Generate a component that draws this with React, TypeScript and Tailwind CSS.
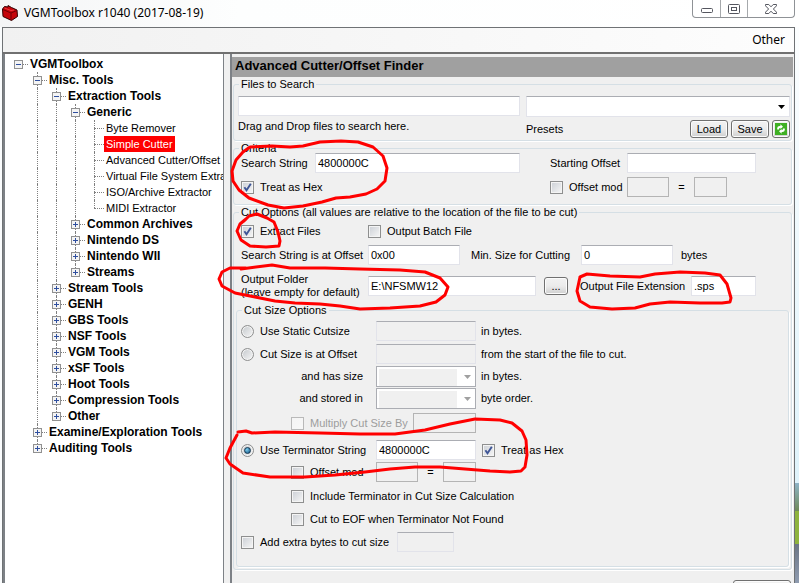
import { useId, type InputHTMLAttributes, type ReactNode } from "react";
import { clsx } from "clsx";

type TreeNode = { name: string; leaf?: boolean; selected?: boolean; children?: TreeNode[] };

const leaf = (name: string, selected = false): TreeNode => ({ name, leaf: true, selected });

const tree: TreeNode = {
  name: "VGMToolbox",
  children: [
    {
      name: "Misc. Tools",
      children: [
        {
          name: "Extraction Tools",
          children: [
            {
              name: "Generic",
              children: [
                leaf("Byte Remover"),
                leaf("Simple Cutter", true),
                leaf("Advanced Cutter/Offset Finder"),
                leaf("Virtual File System Extractor"),
                leaf("ISO/Archive Extractor"),
                leaf("MIDI Extractor"),
              ],
            },
            { name: "Common Archives" },
            { name: "Nintendo DS" },
            { name: "Nintendo WII" },
            { name: "Streams" },
          ],
        },
        { name: "Stream Tools" },
        { name: "GENH" },
        { name: "GBS Tools" },
        { name: "NSF Tools" },
        { name: "VGM Tools" },
        { name: "xSF Tools" },
        { name: "Hoot Tools" },
        { name: "Compression Tools" },
        { name: "Other" },
      ],
    },
    { name: "Examine/Exploration Tools" },
    { name: "Auditing Tools" },
  ],
};

function TreeItem({ node, guides, last, root }: { node: TreeNode; guides: boolean[]; last: boolean; root?: boolean }) {
  return (
    <li>
      <div className="flex h-4 items-center whitespace-nowrap">
        {guides.map((on, i) => (
          <span key={i} className="flex h-4 w-[19px] shrink-0 pl-[9px]">
            {on && <span className="h-4 border-l border-dotted border-[#808080]" />}
          </span>
        ))}
        <span className="relative h-4 w-[19px] shrink-0">
          {!root && (
            <span
              className={clsx("absolute top-0 left-[9px] border-l border-dotted border-[#808080]", last ? "h-2" : "h-4")}
            />
          )}
          <span className="absolute top-2 left-[9px] w-[10px] border-t border-dotted border-[#808080]" />
          {!node.leaf && (
            <button
              aria-label={(node.children ? "Collapse " : "Expand ") + node.name}
              className="absolute top-1 left-[5px] h-[9px] w-[9px] border border-[#919191] bg-[#f4f4f4]"
            >
              <span className="absolute top-[3px] left-[1px] h-px w-[5px] bg-[#2f4f9f]" />
              {!node.children && <span className="absolute top-[1px] left-[3px] h-[5px] w-px bg-[#2f4f9f]" />}
            </button>
          )}
        </span>
        <span
          className={clsx(
            "px-[2px] leading-4",
            node.leaf ? "text-[11px]" : "text-[12px] font-bold",
            node.selected && "bg-[#ff0000] text-white",
          )}
        >
          {node.name}
        </span>
      </div>
      {node.children && (
        <ul>
          {node.children.map((c, i) => (
            <TreeItem
              key={c.name}
              node={c}
              guides={root ? [false] : [...guides, !last]}
              last={i === node.children!.length - 1}
            />
          ))}
        </ul>
      )}
    </li>
  );
}

function Group({ title, className, children }: { title: string; className?: string; children: ReactNode }) {
  return (
    <fieldset className={clsx("min-w-0 rounded-[3px] border border-[#d5dfe5] shadow-[1px_1px_0_#fff]", className)}>
      <legend className="ml-[5px] px-[2px] leading-[10px]">{title}</legend>
      {children}
    </fieldset>
  );
}

function TextBox({ className, ...rest }: InputHTMLAttributes<HTMLInputElement>) {
  return (
    <input
      type="text"
      className={clsx(
        "h-5 min-w-0 border border-[#e2e3ea] border-t-[#abadb3] px-[2px] text-[11px] outline-none",
        rest.disabled ? "bg-[#f0f0f0]" : "bg-white",
        className,
      )}
      {...rest}
    />
  );
}

function Check({ label, checked, disabled, className }: { label: string; checked?: boolean; disabled?: boolean; className?: string }) {
  return (
    <label className={clsx("flex items-center gap-[6px] whitespace-nowrap", disabled && "text-[#9d9d9d]", className)}>
      <span className="grid h-[13px] w-[13px] shrink-0">
        <input
          type="checkbox"
          defaultChecked={checked}
          disabled={disabled}
          className={clsx(
            "peer col-start-1 row-start-1 h-[13px] w-[13px] appearance-none border bg-linear-to-br",
            disabled
              ? "border-[#b9b9b9] from-[#f4f4f4] to-[#f8f8f8]"
              : "border-[#8e8f8f] from-[#cbcfd5] to-[#f7f7f7] shadow-[inset_0_0_0_1px_#f4f4f4]",
          )}
        />
        <svg viewBox="0 0 13 13" className="pointer-events-none invisible col-start-1 row-start-1 peer-checked:visible">
          <path d="M3.4 6.2 L5.5 9.2 L9.8 2.8" fill="none" stroke="#3f5696" strokeWidth="1.9" />
        </svg>
      </span>
      {label}
    </label>
  );
}

function Radio({ label, checked, className }: { label: string; checked?: boolean; className?: string }) {
  return (
    <label className={clsx("flex items-center gap-[6px] whitespace-nowrap", className)}>
      <span className="grid h-[13px] w-[13px] shrink-0">
        <input
          type="radio"
          name="cut-size"
          defaultChecked={checked}
          className="peer col-start-1 row-start-1 h-[13px] w-[13px] appearance-none rounded-full border border-[#8e8f8f] bg-linear-to-br from-[#c4c8cc] to-[#f7f7f7] shadow-[inset_0_0_0_1px_#f4f4f4]"
        />
        <span className="pointer-events-none invisible col-start-1 row-start-1 m-[3px] rounded-full border border-[#12344f] bg-radial-[at_35%_30%] from-[#7fd0f0] to-[#0f4f80] peer-checked:visible" />
      </span>
      {label}
    </label>
  );
}

function DisabledSelect({ label }: { label: string }) {
  return (
    <span className="grid h-[21px] w-[100px] border border-[#abadb3] bg-white p-[2px]">
      <select aria-label={label} disabled className="col-start-1 row-start-1 mr-4 appearance-none bg-[#f0f0f0]">
        <option></option>
      </select>
      <svg viewBox="0 0 7 4" className="pointer-events-none col-start-1 row-start-1 mr-[2px] h-1 w-[7px] self-center justify-self-end">
        <path d="M0 0H7L3.5 4Z" fill="#a0a0a0" />
      </svg>
    </span>
  );
}

const buttonClass =
  "rounded-[3px] border border-[#707070] bg-linear-to-b from-[#f2f2f2] via-[#ebebeb] via-50% to-[#cfcfcf] shadow-[inset_0_0_0_1px_#fcfcfc]";

function OffsetMod({ className }: { className: string }) {
  return (
    <>
      <Check label="Offset mod" className={className} />
      <TextBox aria-label="Offset modulus" disabled className="w-[42px] border-[#b4b4b4]!" />
      <span className="w-[25px] text-center">=</span>
      <TextBox aria-label="Offset remainder" disabled className="w-[33px] border-[#b4b4b4]!" />
    </>
  );
}

function TitleBar() {
  return (
    <header className="flex h-[27px] items-start justify-between bg-linear-to-r from-[#f4f5f6] via-[#fdfefe] via-30% to-white">
      <div className="flex h-[26px] items-center gap-[6px] pl-[2px] font-['Noto_Sans','Open_Sans',sans-serif] text-[12px]">
        <svg viewBox="0 0 16 16" className="h-4 w-4" aria-hidden="true">
          <path d="M0.5 4 L2.5 1.5 L6 2 L6 0.5 L9.5 2.5 L15 5 L15.5 11.5 L9.5 15.5 L1 11.5Z" fill="#c5050b" stroke="#300" strokeWidth="1" />
          <path d="M1 4.5 L9 8 L15 5.4 M9 8 V15" fill="none" stroke="#700004" />
          <path d="M2.5 3 L9 5.5 L12 5" fill="none" stroke="#f0383c" />
        </svg>
        <h1>VGMToolbox r1040 (2017-08-19)</h1>
      </div>
      <div className="mr-[4px] flex h-[18px] w-[103px] rounded-b-[4px] border border-t-0 border-[#8f9296] bg-white/60">
        <button aria-label="Minimize" className="flex w-[28px] items-center justify-center border-r border-[#a6a9ac] pt-1">
          <svg viewBox="0 0 12 5" className="h-[5px] w-3">
            <rect x="0.5" y="0.5" width="11" height="4" rx="1" fill="#fff" stroke="#54565f" />
          </svg>
        </button>
        <button aria-label="Maximize" className="flex w-[27px] items-center justify-center border-r border-[#a6a9ac]">
          <svg viewBox="0 0 12 10" className="h-[10px] w-3">
            <rect x="0.5" y="0.5" width="11" height="9" rx="1" fill="#fff" stroke="#54565f" />
            <rect x="3.5" y="3.5" width="5" height="3" fill="#fff" stroke="#54565f" />
          </svg>
        </button>
        <button aria-label="Close" className="flex flex-1 items-center justify-center">
          <svg viewBox="0 0 12 10" className="h-[10px] w-3">
            <path
              d="M0.5 0.5 H3.8 L6 2.8 L8.2 0.5 H11.5 V1.8 L8.4 5 L11.5 8.2 V9.5 H8.2 L6 7.2 L3.8 9.5 H0.5 V8.2 L3.6 5 L0.5 1.8Z"
              fill="#fff"
              stroke="#54565f"
            />
          </svg>
        </button>
      </div>
    </header>
  );
}

function FilesGroup() {
  const id = useId();
  return (
    <Group title="Files to Search" className="h-[62px]">
      <div className="grid grid-cols-[282px_1fr] gap-x-[6px] pt-[7px] pr-px pl-1">
        <div>
          <TextBox aria-label="Files to search" className="block w-full" />
          <p className="mt-1 leading-3">Drag and Drop files to search here.</p>
        </div>
        <div>
          <div className="grid h-[21px] border border-[#e2e3ea] border-t-[#abadb3] bg-white">
            <select id={id} className="col-start-1 row-start-1 appearance-none outline-none">
              <option></option>
            </select>
            <svg viewBox="0 0 7 4" className="pointer-events-none col-start-1 row-start-1 mr-1 h-1 w-[7px] self-center justify-self-end">
              <path d="M0 0H7L3.5 4Z" fill="#000" />
            </svg>
          </div>
          <div className="mt-[3px] flex h-[18px] items-center gap-[3px]">
            <label htmlFor={id} className="mr-auto">Presets</label>
            <button className={clsx(buttonClass, "h-[18px] w-[38px] leading-4")}>Load</button>
            <button className={clsx(buttonClass, "h-[18px] w-[38px] leading-4")}>Save</button>
            <button aria-label="Reload presets" className={clsx(buttonClass, "flex h-[18px] w-[18px] items-center justify-center")}>
              <svg viewBox="0 0 12 12" className="h-3 w-3 shrink-0">
                <rect width="12" height="12" fill="#3fb024" />
                <path d="M2.2 6.5 V5 Q2.4 2.9 4.6 2.9 H5.4 V1.2 L8 3.8 L5.4 6 V4.7 Q4 4.6 4 6.5Z" fill="#fff" />
                <path d="M9.8 5.5 V7 Q9.6 9.1 7.4 9.1 H6.6 V10.8 L4 8.2 L6.6 6 V7.3 Q8 7.4 8 5.5Z" fill="#fff" />
              </svg>
            </button>
          </div>
        </div>
      </div>
    </Group>
  );
}

function CriteriaGroup() {
  const id = useId();
  return (
    <Group title="Criteria" className="h-[62px]">
      <div className="grid grid-cols-[279px_1fr] gap-x-[30px] gap-y-1 pl-[7px]">
        <div className="flex items-center">
          <label htmlFor={id + "s"} className="w-[74px]">Search String</label>
          <TextBox id={id + "s"} defaultValue="4800000C" className="flex-1" />
        </div>
        <div className="flex items-center">
          <label htmlFor={id + "o"} className="w-[77px]">Starting Offset</label>
          <TextBox id={id + "o"} className="w-[129px]" />
        </div>
        <Check label="Treat as Hex" checked />
        <div className="flex items-center">
          <OffsetMod className="w-[77px]" />
        </div>
      </div>
    </Group>
  );
}

function CutSizeGroup() {
  return (
    <Group title="Cut Size Options" className="mr-[2px] ml-[2px]">
      <div className="pb-[14px] pl-1">
        <div className="mt-[6px] flex h-5 items-center">
          <Radio label="Use Static Cutsize" className="w-[135px]" />
          <TextBox aria-label="Static cut size" disabled className="w-[100px]" />
          <span className="ml-[5px]">in bytes.</span>
        </div>
        <div className="mt-[3px] flex h-5 items-center">
          <Radio label="Cut Size is at Offset" className="w-[135px]" />
          <TextBox aria-label="Cut size offset" disabled className="w-[100px]" />
          <span className="ml-[5px]">from the start of the file to cut.</span>
        </div>
        <div className="mt-[2px] flex items-center">
          <span className="w-[135px] pr-[13px] text-right">and has size</span>
          <DisabledSelect label="Size" />
          <span className="ml-[5px]">in bytes.</span>
        </div>
        <div className="mt-px flex items-center">
          <span className="w-[135px] pr-[13px] text-right">and stored in</span>
          <DisabledSelect label="Byte order" />
          <span className="ml-[5px]">byte order.</span>
        </div>
        <div className="mt-1 flex h-5 items-center pl-[50px]">
          <Check label="Multiply Cut Size By" disabled className="w-[122px]" />
          <TextBox aria-label="Cut size multiplier" disabled className="w-[63px] border-[#b4b4b4]!" />
        </div>
        <div className="mt-[7px] flex h-5 items-center">
          <Radio label="Use Terminator String" checked className="w-[135px]" />
          <TextBox aria-label="Terminator string" defaultValue="4800000C" className="w-[100px]" />
          <Check label="Treat as Hex" checked className="ml-[6px]" />
        </div>
        <div className="mt-[2px] flex h-5 items-center pl-[50px]">
          <OffsetMod className="w-[85px]" />
        </div>
        <Check label="Include Terminator in Cut Size Calculation" className="mt-1 ml-[50px] h-5" />
        <Check label="Cut to EOF when Terminator Not Found" className="mt-[3px] ml-[50px] h-5" />
        <div className="mt-[3px] flex h-5 items-center">
          <Check label="Add extra bytes to cut size" className="w-[156px]" />
          <TextBox aria-label="Extra bytes" disabled className="w-[57px]" />
        </div>
      </div>
    </Group>
  );
}

function CutOptionsGroup() {
  const id = useId();
  return (
    <Group title="Cut Options (all values are relative to the location of the file to be cut)" className="pb-[2px]">
      <div className="pl-[7px]">
        <div className="mt-1 flex h-5 items-center">
          <Check label="Extract Files" checked className="w-[127px]" />
          <Check label="Output Batch File" />
        </div>
        <div className="mt-1 flex h-5 items-center">
          <label htmlFor={id + "a"} className="w-[127px]">Search String is at Offset</label>
          <TextBox id={id + "a"} defaultValue="0x00" className="w-[92px]" />
          <label htmlFor={id + "b"} className="ml-[11px] w-[110px]">Min. Size for Cutting</label>
          <TextBox id={id + "b"} defaultValue="0" className="w-[92px]" />
          <span className="ml-2">bytes</span>
        </div>
        <div className="mt-2 flex items-center">
          <label htmlFor={id + "c"} className="w-[127px] leading-[13px]">
            Output Folder
            <br />
            (leave empty for default)
          </label>
          <TextBox id={id + "c"} defaultValue="E:\NFSMW12" className="w-[168px]" />
          <button aria-label="Browse" className={clsx(buttonClass, "ml-2 h-[18px] w-6 leading-4")}>...</button>
          <label htmlFor={id + "d"} className="ml-3 w-[111px]">Output File Extension</label>
          <TextBox id={id + "d"} defaultValue=".sps" className="w-[65px]" />
        </div>
      </div>
      <div className="mt-[6px]">
        <CutSizeGroup />
      </div>
    </Group>
  );
}

/* Hand-drawn red rings laid over the form fields they point out. */
function Annotations() {
  return (
    <svg
      aria-hidden="true"
      width="799"
      height="583"
      className="pointer-events-none absolute top-0 left-0"
      fill="none"
      stroke="#ff0000"
      strokeWidth="3"
      strokeLinejoin="round"
      strokeLinecap="round"
    >
      <path d="M250 147 L272 146 L290 147 L303 146 L320 142 L341 141 L358 142 L373 147 L383 156 L387 168 L385 181 L377 189 L366 194 L350 197 L336 198 L322 202 L303 206 L284 208 L268 205 L249 198 L239 190 L233 181 L232 171 L236 160 L243 152 L250 147" />
      <path d="M246 219 L240 224 L237 231 L241 240 L250 246 L266 247 L279 246 L280 241 L278 232 L274 222 L267 218 L257 214 L249 216 L244 221" />
      <path d="M241 269 L272 265 L290 268 L325 268 L360 269 L400 270 L425 272 L440 278 L448 287 L445 295 L436 302 L420 306 L390 308 L360 309 L340 306 L320 304 L295 303 L275 301 L255 297 L235 293 L222 286 L219 279 L222 272 L230 268 L246 268" />
      <path d="M580 277 L587 274 L610 276 L640 277 L655 274 L680 272 L705 273 L720 275 L727 284 L731 298 L730 302 L722 303 L700 303 L670 302 L650 304 L635 308 L612 309 L590 307 L580 301 L577 291 L580 277" />
      <path d="M238 432 L246 431 L252 433 L275 432 L320 433 L360 434 L395 434 L425 430 L450 424 L475 419 L500 420 L512 423 L522 431 L526 440 L527 455 L525 467 L521 471 L510 472 L490 471 L465 469 L440 467 L415 467 L390 469 L365 472 L335 475 L305 477 L270 477 L243 473 L230 464 L226 458 L230 448 L237 435" />
    </svg>
  );
}

export default function App() {
  return (
    <div className="relative flex h-screen flex-col overflow-hidden bg-[#fafcfd] font-['Liberation_Sans',Arial,sans-serif] text-[11px] text-black">
      <TitleBar />
      <div className="flex min-h-0 flex-1">
        <div className="ml-[2px] flex min-w-0 flex-1 flex-col border-t border-r border-l border-[#6f7275] bg-[#f0f0f0]">
          <nav className="flex h-6 shrink-0 items-center justify-end bg-linear-to-r from-[#f1f1f1] to-[#fdfdfd] pr-[9px] font-['Noto_Sans','Open_Sans',sans-serif] text-[12px]">
            <button>Other</button>
          </nav>
          <div className="flex min-h-0 flex-1 gap-[6px] border-t-2 border-[#707070]">
            <aside className="w-[221px] shrink-0 overflow-hidden border-r border-l-2 border-[#7d8186] bg-white pt-[2px] pl-1">
              <ul>
                <TreeItem node={tree} guides={[]} last root />
              </ul>
            </aside>
            <main className="min-w-0 flex-1 overflow-hidden border-l-2 border-[#7d8186] pt-[3px] pr-px">
              <h2 className="h-5 bg-[#a0a0a0] pl-[3px] text-[13px] leading-[18px] font-bold">Advanced Cutter/Offset Finder</h2>
              <div className="flex flex-col gap-[2px] px-px pt-[2px] whitespace-nowrap">
                <FilesGroup />
                <CriteriaGroup />
                <CutOptionsGroup />
                <button aria-label="Start cutting" className={clsx(buttonClass, "mt-2 mr-px h-6 w-[58px] self-end")} />
              </div>
            </main>
          </div>
        </div>
        <div className="flex w-1 flex-col">
          <div className="h-[82%] bg-linear-to-b from-[#fcfeff] to-[#dff3fb]" />
          <div className="h-[5%] bg-linear-to-b from-[#8fb4c8] to-[#6f8a58]" />
          <div className="h-[6%] bg-[#8fb43f]" />
          <div className="flex-1 bg-linear-to-b from-[#6c7686] to-[#8f9cb0]" />
        </div>
      </div>
      <Annotations />
    </div>
  );
}
